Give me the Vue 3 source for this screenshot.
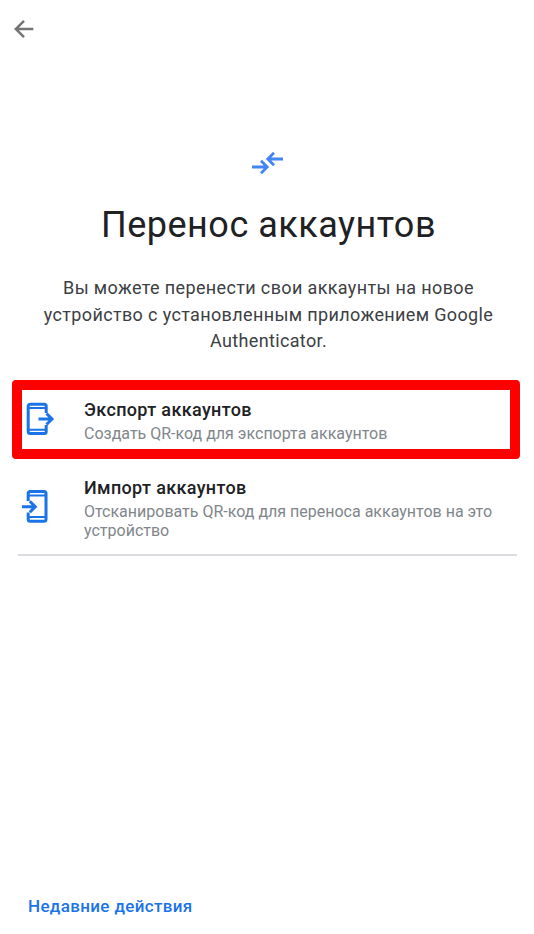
<script setup>
const rows = [
  { key: 'export', title: 'Экспорт аккаунтов', sub: 'Создать QR-код для экспорта аккаунтов' },
  { key: 'import', title: 'Импорт аккаунтов', sub: 'Отсканировать QR-код для переноса аккаунтов на это устройство' }
]
</script>

<template>
  <div class="page">
    <header class="top">
      <svg class="back" width="24" height="24" viewBox="0 0 24 24" fill="none">
        <path d="M20.300 12H3.500M11 3.800 2.800 12 11 20.200" stroke="#757575" stroke-width="2.500" />
      </svg>
    </header>
    <main class="hero">
      <svg class="swap" width="34" height="26" viewBox="0 0 34 26" fill="none">
        <path d="M1 15h15M10 8.800 16.200 15 10 21.200" stroke="#4285f4" stroke-width="2.800" />
        <path d="M32 7H17M23 .8 16.800 7 23 13.200" stroke="#4285f4" stroke-width="2.800" />
      </svg>
      <h1 class="title">Перенос аккаунтов</h1>
      <p class="lead">Вы можете перенести свои аккаунты на новое устройство с установленным приложением Google Authenticator.</p>
    </main>
    <section class="list">
      <div v-for="r in rows" :key="r.key" class="row" :class="r.key">
        <svg v-if="r.key === 'export'" class="ico" width="30" height="36" viewBox="0 0 30 36" fill="none">
          <path d="M20.200 11V4.200a2 2 0 0 0-2-2H4.200a2 2 0 0 0-2 2v25.300a2 2 0 0 0 2 2h14a2 2 0 0 0 2-2V23" stroke="#1a73e8" stroke-width="3" />
          <path d="M3 6h16.500M3 27.700h16.500" stroke="#1a73e8" stroke-width="2" />
          <path d="M12.500 17H24.500M20.500 11.500 26 17l-5.500 5.500" stroke="#1a73e8" stroke-width="3" />
        </svg>
        <svg v-else class="ico" width="30" height="36" viewBox="0 0 30 36" fill="none">
          <path d="M6.200 13V5.500a2 2 0 0 1 2-2H22a2 2 0 0 1 2 2v25.700a2 2 0 0 1-2 2H8.200a2 2 0 0 1-2-2V24.500" stroke="#1a73e8" stroke-width="3" />
          <path d="M7 7.500h16.500M7 29h16.500" stroke="#1a73e8" stroke-width="2" />
          <path d="M0 18.700h12M7.800 13.200l5.500 5.500-5.500 5.500" stroke="#1a73e8" stroke-width="3" />
        </svg>
        <div class="text">
          <div class="name">{{ r.title }}</div>
          <div class="sub">{{ r.sub }}</div>
        </div>
      </div>
    </section>
    <footer class="foot">Недавние действия</footer>
  </div>
</template>

<style>
html, body { margin: 0; background: #fff; }
</style>

<style scoped>
.page {
  width: 534px;
  height: 934px;
  display: flex;
  flex-direction: column;
  font-family: Roboto, "Liberation Sans", sans-serif;
  background: #fff;
  overflow: hidden;
}
.top { padding: 17px 0 0 13px; height: 152px; box-sizing: border-box; }
.back { display: block; }
.hero { display: flex; flex-direction: column; align-items: center; padding-left: 3px; }
.swap { display: block; margin-left: -1px; }
.title {
  margin: 24px 0 0;
  font-size: 36px;
  line-height: 46px;
  font-weight: 400;
  color: #202124;
  letter-spacing: 0.5px;
}
.lead {
  margin: 27px 0 0;
  width: 470px;
  font-size: 18px;
  line-height: 26.500px;
  text-align: center;
  color: #3c4043;
  letter-spacing: 0.36px;
}
.list {
  margin: 25px 14px 0 12px;
}
.row { display: flex; align-items: flex-start; }
.row.export {
  border: 10px solid #f00;
  border-radius: 4px;
  height: 79px;
  box-sizing: border-box;
  padding: 8px 0 0 4px;
}
.row.import {
  margin: 17px 3px 0 6px;
  padding: 0 0 13px 4px;
  border-bottom: 2px solid #dadce0;
}
.ico { flex: none; }
.export .ico { margin-top: 4px; }
.import .ico { margin-top: 12px; }
.text { margin-left: 28px; }
.import .text { margin-left: 32px; }
.name { font-size: 18px; line-height: 24px; font-weight: 500; color: #202124; letter-spacing: 0.35px; }
.sub { margin-top: 2px; font-size: 16px; line-height: 19.500px; color: #80868b; }
.foot {
  margin-top: auto;
  padding: 0 0 18px 28px;
  font-size: 17px;
  line-height: 20px;
  font-weight: 500;
  color: #1a73e8;
  letter-spacing: 0.35px;
}
</style>
